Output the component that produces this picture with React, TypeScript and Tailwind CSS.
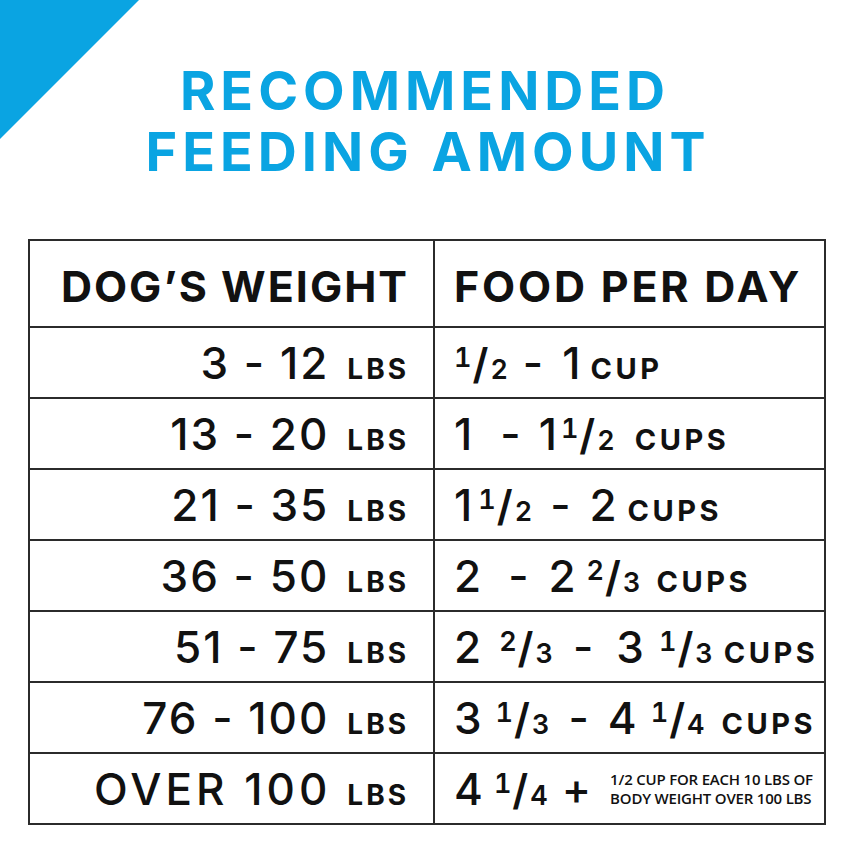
import React from 'react';

type Tok =
  | { t: 'n'; v: string; ml?: string }
  | { t: 'f'; n: string; d: string; ml?: string }
  | { t: 'u'; v: string; ml?: string };

const Frac = ({ n, d, className = '' }: { n: string; d: string; className?: string }) => (
  <span className={`inline-flex items-baseline font-semibold text-[27px] tabular-nums ${className}`}>
    <span className="relative -top-[12px]">{n}</span>
    <span className="text-[42px] font-semibold ml-[1px] mr-[2px]">/</span>
    <span>{d}</span>
  </span>
);

const Cell = ({ tokens }: { tokens: Tok[] }) => (
  <div className="flex items-baseline">
    {tokens.map((tk, i) => {
      if (tk.t === 'f') return <Frac key={i} n={tk.n} d={tk.d} className={tk.ml ?? ''} />;
      if (tk.t === 'u')
        return (
          <span key={i} className={`text-[29px] font-bold tracking-[3.5px] ${tk.ml ?? ''}`}>
            {tk.v}
          </span>
        );
      return (
        <span key={i} className={`text-[44px] font-medium ${tk.ml ?? ''}`}>
          {tk.v}
        </span>
      );
    })}
  </div>
);

const rows: { w: string; food: Tok[] }[] = [
  {
    w: '3 - 12',
    food: [
      { t: 'f', n: '1', d: '2' },
      { t: 'n', v: '-', ml: 'ml-[15px]' },
      { t: 'n', v: '1', ml: 'ml-[19px]' },
      { t: 'u', v: 'CUP', ml: 'ml-[10px]' },
    ],
  },
  {
    w: '13 - 20',
    food: [
      { t: 'n', v: '1' },
      { t: 'n', v: '-', ml: 'ml-[28px]' },
      { t: 'n', v: '1', ml: 'ml-[18px]' },
      { t: 'f', n: '1', d: '2', ml: 'ml-[4px]' },
      { t: 'u', v: 'CUPS', ml: 'ml-[20px]' },
    ],
  },
  {
    w: '21 - 35',
    food: [
      { t: 'n', v: '1' },
      { t: 'f', n: '1', d: '2', ml: 'ml-[6px]' },
      { t: 'n', v: '-', ml: 'ml-[18px]' },
      { t: 'n', v: '2', ml: 'ml-[19px]' },
      { t: 'u', v: 'CUPS', ml: 'ml-[11px]' },
    ],
  },
  {
    w: '36 - 50',
    food: [
      { t: 'n', v: '2' },
      { t: 'n', v: '-', ml: 'ml-[27px]' },
      { t: 'n', v: '2', ml: 'ml-[20px]' },
      { t: 'f', n: '2', d: '3', ml: 'ml-[11px]' },
      { t: 'u', v: 'CUPS', ml: 'ml-[16px]' },
    ],
  },
  {
    w: '51 - 75',
    food: [
      { t: 'n', v: '2' },
      { t: 'f', n: '2', d: '3', ml: 'ml-[18px]' },
      { t: 'n', v: '-', ml: 'ml-[20px]' },
      { t: 'n', v: '3', ml: 'ml-[23px]' },
      { t: 'f', n: '1', d: '3', ml: 'ml-[15px]' },
      { t: 'u', v: 'CUPS', ml: 'ml-[11px]' },
    ],
  },
  {
    w: '76 - 100',
    food: [
      { t: 'n', v: '3' },
      { t: 'f', n: '1', d: '3', ml: 'ml-[14px]' },
      { t: 'n', v: '-', ml: 'ml-[19px]' },
      { t: 'n', v: '4', ml: 'ml-[19px]' },
      { t: 'f', n: '1', d: '4', ml: 'ml-[14px]' },
      { t: 'u', v: 'CUPS', ml: 'ml-[17px]' },
    ],
  },
];

export default function App() {
  return (
    <div className="relative w-[854px] h-[854px] bg-white overflow-hidden font-['Inter',sans-serif] text-[#111]">
      <svg className="absolute top-0 left-0" width="139" height="139" viewBox="0 0 139 139">
        <polygon points="0,0 139,0 0,139" fill="#0aa4e2" />
      </svg>

      <div className="pt-[60px] text-center text-[54px] leading-[61px] font-bold tracking-[5px] text-[#0aa4e2]">
        <div className="pr-[4px]">RECOMMENDED</div>
        <div className="pl-[2px]">FEEDING AMOUNT</div>
      </div>

      <div className="mx-[28px] mt-[57px] border-2 border-[#2b2b2b] grid grid-cols-[405px_1fr]">
        <div className="h-[85px] border-r-2 border-[#2b2b2b] flex items-center justify-end pr-[24px] pt-[6px] text-[43px] font-bold tracking-[2px]">
          DOG’S WEIGHT
        </div>
        <div className="h-[85px] flex items-center pl-[19px] pt-[6px] text-[43px] font-bold tracking-[2.8px]">
          FOOD PER DAY
        </div>

        {rows.map((r) => (
          <React.Fragment key={r.w}>
            <div className="h-[71px] border-t-2 border-r-2 border-[#2b2b2b] flex items-center justify-end pr-[24px]">
              <div className="flex items-baseline">
                <span className="text-[44px] font-medium tracking-[2px]">{r.w}</span>
                <span className="ml-[18px] text-[28px] font-bold tracking-[3px]">LBS</span>
              </div>
            </div>
            <div className="h-[71px] border-t-2 border-[#2b2b2b] flex items-center pl-[19px]">
              <Cell tokens={r.food} />
            </div>
          </React.Fragment>
        ))}

        <div className="h-[71px] border-t-2 border-r-2 border-[#2b2b2b] flex items-center justify-end pr-[24px]">
          <div className="flex items-baseline">
            <span className="text-[44px] font-medium tracking-[4px]">OVER 100</span>
            <span className="ml-[16px] text-[28px] font-bold tracking-[3px]">LBS</span>
          </div>
        </div>
        <div className="h-[71px] border-t-2 border-[#2b2b2b] flex items-center pl-[19px]">
          <div className="flex items-baseline">
            <span className="text-[44px] font-medium">4</span>
            <Frac n="1" d="4" className="ml-[11px]" />
            <span className="ml-[14px] text-[44px] font-medium">+</span>
            <div className="ml-[19px] self-center font-['Open_Sans',sans-serif] font-semibold text-[15px] leading-[19px] tracking-[-0.2px]">
              <div>1/2 CUP FOR EACH 10 LBS OF</div>
              <div>BODY WEIGHT OVER 100 LBS</div>
            </div>
          </div>
        </div>
      </div>
    </div>
  );
}
